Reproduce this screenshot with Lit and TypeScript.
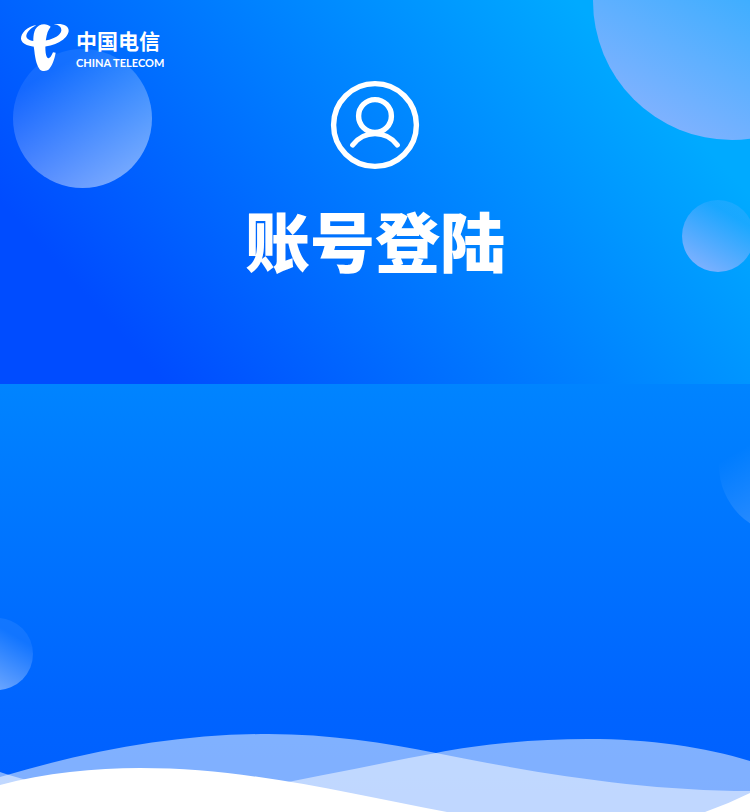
import { LitElement, html, css } from "lit";
import { customElement } from "lit/decorators.js";

@customElement("telecom-brand")
class TelecomBrand extends LitElement {
  static styles = css`
    :host {
      display: flex;
      align-items: center;
      gap: 6px;
      color: #fff;
    }
    .mark {
      display: block;
      width: 50px;
      height: 50px;
      fill: currentColor;
    }
    .words {
      display: flex;
      flex-direction: column;
      white-space: nowrap;
    }
    .zh {
      font: 700 21px/31px "Noto Sans CJK SC", sans-serif;
    }
    .en {
      font: 700 11px/14px Lato, sans-serif;
    }
  `;

  render() {
    return html`
      <svg class="mark" viewBox="6 6 150 150" aria-hidden="true">
        <path d="M55 15C28 19 8 40 9 57C11 73 34 81 66 81C110 80 149 58 152 33C153 16 132 9 107 13C122 14 131 21 130 32C127 46 108 56 86 61C58 67 28 64 25 50C24 39 36 26 55 15Z" />
        <path d="M98 20C86 8 61 10 52 28C44 45 45 68 49 92C52 121 58 139 66 149C72 154 86 154 93 148C102 136 109 121 113 98L105 97C99 111 94 117 89 114C81 107 81 77 84 58C86 42 90 30 98 20Z" />
      </svg>
      <div class="words">
        <span class="zh" lang="zh-CN">中国电信</span>
        <span class="en">CHINA TELECOM</span>
      </div>
    `;
  }
}

@customElement("app-root")
class AppRoot extends LitElement {
  static styles = css`
    :host {
      display: flex;
      flex-direction: column;
      min-height: 100vh;
      color: #fff;
    }
    .hero {
      position: relative;
      overflow: hidden;
      display: flex;
      flex-direction: column;
      padding: 22px 20px 96px;
      background: linear-gradient(48deg, #004cff 15%, #00aaff 84%);
    }
    .hero telecom-brand,
    .login {
      position: relative;
    }
    .login {
      display: flex;
      flex-direction: column;
      align-items: center;
      gap: 20px;
      padding-top: 8px;
    }
    .avatar {
      display: block;
      width: 90px;
      height: 90px;
      fill: none;
      stroke: currentColor;
    }
    .title {
      margin: 0;
      font: 900 65px/98px "Noto Sans CJK SC", sans-serif;
      white-space: nowrap;
    }
    .body {
      position: relative;
      overflow: hidden;
      flex: 1;
      display: flex;
      flex-direction: column;
      justify-content: flex-end;
      min-height: 420px;
      background: linear-gradient(180deg, #0084ff, #0064ff 75%, #005eff);
    }
    .waves {
      position: relative;
      display: block;
      width: 100%;
      height: auto;
      fill: #fff;
    }
    .veil {
      fill-opacity: 0.5;
    }
    .bubble {
      position: absolute;
      border-radius: 50%;
    }
    .large {
      width: 278px;
      height: 278px;
    }
    .medium {
      width: 139px;
      height: 139px;
    }
    .small {
      width: 72px;
      height: 72px;
    }
    .b1 {
      left: 13px;
      top: 49px;
      background: linear-gradient(150deg, rgba(255, 255, 255, 0.08) 20%, rgba(255, 255, 255, 0.5) 95%);
    }
    .b2 {
      right: -121px;
      top: -138px;
      background: linear-gradient(30deg, #80b2ff 12%, rgba(128, 178, 255, 0.2) 76%);
    }
    .b3 {
      right: -4px;
      top: 200px;
      background: linear-gradient(30deg, #80b2ff 10%, rgba(128, 178, 255, 0.2) 75%);
    }
    .b4 {
      right: -108px;
      top: 12px;
      background: linear-gradient(150deg, rgba(255, 255, 255, 0) 30%, rgba(255, 255, 255, 0.28) 100%);
    }
    .b5 {
      left: -39px;
      top: 234px;
      background: linear-gradient(210deg, rgba(255, 255, 255, 0.07) 25%, rgba(255, 255, 255, 0.5) 95%);
    }
  `;

  render() {
    return html`
      <header class="hero">
        <span class="bubble medium b1"></span>
        <span class="bubble large b2"></span>
        <span class="bubble small b3"></span>
        <telecom-brand></telecom-brand>
        <div class="login">
          <svg class="avatar" viewBox="0 0 90 90" aria-hidden="true">
            <circle cx="45" cy="45" r="41.4" stroke-width="5.4" />
            <circle cx="45" cy="36" r="16.4" stroke-width="5.4" />
            <path d="M22.7 65C34 50 56 50 67.3 65" stroke-width="5.2" stroke-linecap="round" />
          </svg>
          <h1 class="title" lang="zh-CN">账号登陆</h1>
        </div>
      </header>
      <main class="body">
        <span class="bubble medium b4"></span>
        <span class="bubble small b5"></span>
        <svg class="waves" viewBox="0 0 750 80" aria-hidden="true">
          <path class="veil" d="M0 45C90 18 180 2 268 2C330 2 385 11 436 21C530 40 640 59 750 59V80H0Z" />
          <path class="veil" d="M0 40C60 60 150 75 230 60C300 49 370 33 436 21C480 12 535 7 588 7C650 7 705 15 750 29V80H0Z" />
          <path d="M0 53C45 41 95 36 140 36C250 36 350 62 447 80H0Z" />
          <path d="M705 80Q728 72 750 61V80Z" />
        </svg>
      </main>
    `;
  }
}
